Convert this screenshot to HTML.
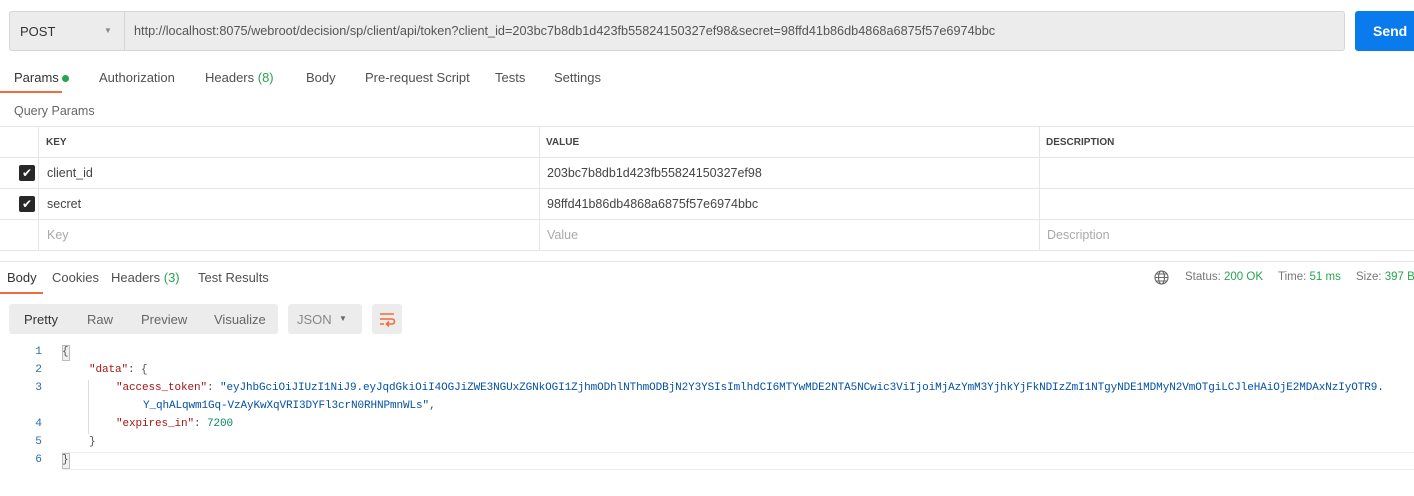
<!DOCTYPE html>
<html><head><meta charset="utf-8"><style>
*{margin:0;padding:0;box-sizing:border-box}
body{width:1414px;height:496px;overflow:hidden;background:#fff;font-family:"Liberation Sans",sans-serif;font-size:12px;color:#505050;position:relative}
.a{position:absolute;white-space:nowrap}
.g{color:#26a550}
.code{font-family:"Liberation Mono",monospace;font-size:11px;letter-spacing:-0.1px}
.ln{position:absolute;left:20px;width:22px;text-align:right;color:#2a6ea7;font-family:"Liberation Mono",monospace;font-size:11.2px}
.k{color:#a31515}.s{color:#0451a5}.n{color:#098658}
</style></head><body>
<div class="a" style="left:9px;top:11px;width:1336px;height:40px;background:#ececec;border:1px solid #d6d6d6;border-radius:3px"></div>
<div class="a" style="left:124px;top:12px;width:1px;height:38px;background:#d6d6d6"></div>
<div class="a" style="left:20px;top:24px;font-size:13px;color:#333">POST</div>
<div class="a" style="left:104px;top:26px;font-size:8px;color:#888">▼</div>
<div class="a" style="left:134px;top:24px;font-size:12.7px;color:#555">http://localhost:8075/webroot/decision/sp/client/api/token?client_id=203bc7b8db1d423fb55824150327ef98&amp;secret=98ffd41b86db4868a6875f57e6974bbc</div>
<div class="a" style="left:1355px;top:11px;width:70px;height:40px;background:#097bed;border-radius:3px;color:#fff;font-weight:bold;font-size:14px;padding:12px 0 0 18px">Send</div>

<div class="a" style="left:14px;top:70px;font-size:13px;color:#333">Params <span style="display:inline-block;width:7px;height:7px;border-radius:50%;background:#26a550"></span></div>
<div class="a" style="left:0;top:91px;width:62px;height:2px;background:#f26b3a"></div>
<div class="a" style="left:99px;top:70px;font-size:13px">Authorization</div>
<div class="a" style="left:205px;top:70px;font-size:13px">Headers <span class="g">(8)</span></div>
<div class="a" style="left:306px;top:70px;font-size:13px">Body</div>
<div class="a" style="left:365px;top:70px;font-size:13px">Pre-request Script</div>
<div class="a" style="left:495px;top:70px;font-size:13px">Tests</div>
<div class="a" style="left:554px;top:70px;font-size:13px">Settings</div>
<div class="a" style="left:14px;top:104px;font-size:12.5px;color:#666">Query Params</div>

<div class="a" style="left:0;top:126px;width:1414px;height:1px;background:#e6e6e6"></div>
<div class="a" style="left:0;top:157px;width:1414px;height:1px;background:#e6e6e6"></div>
<div class="a" style="left:0;top:188px;width:1414px;height:1px;background:#e6e6e6"></div>
<div class="a" style="left:0;top:219px;width:1414px;height:1px;background:#e6e6e6"></div>
<div class="a" style="left:0;top:250px;width:1414px;height:1px;background:#e6e6e6"></div>
<div class="a" style="left:38px;top:126px;width:1px;height:125px;background:#e6e6e6"></div>
<div class="a" style="left:539px;top:126px;width:1px;height:125px;background:#e6e6e6"></div>
<div class="a" style="left:1039px;top:126px;width:1px;height:125px;background:#e6e6e6"></div>
<div class="a" style="left:46px;top:137px;font-size:10px;font-weight:bold;color:#444">KEY</div>
<div class="a" style="left:546px;top:137px;font-size:10px;font-weight:bold;color:#444">VALUE</div>
<div class="a" style="left:1046px;top:137px;font-size:10px;font-weight:bold;color:#444">DESCRIPTION</div>
<div class="a" style="left:19px;top:165px;width:16px;height:16px;background:#282828;border-radius:2px;color:#fff;font-size:12px;text-align:center;line-height:16px">✔</div>
<div class="a" style="left:19px;top:196px;width:16px;height:16px;background:#282828;border-radius:2px;color:#fff;font-size:12px;text-align:center;line-height:16px">✔</div>
<div class="a" style="left:47px;top:166px;font-size:12.5px;color:#444">client_id</div>
<div class="a" style="left:547px;top:166px;font-size:12.5px;color:#444">203bc7b8db1d423fb55824150327ef98</div>
<div class="a" style="left:47px;top:197px;font-size:12.5px;color:#444">secret</div>
<div class="a" style="left:547px;top:197px;font-size:12.5px;color:#444">98ffd41b86db4868a6875f57e6974bbc</div>
<div class="a" style="left:47px;top:228px;font-size:12.5px;color:#aaa">Key</div>
<div class="a" style="left:547px;top:228px;font-size:12.5px;color:#aaa">Value</div>
<div class="a" style="left:1047px;top:228px;font-size:12.5px;color:#aaa">Description</div>

<div class="a" style="left:0;top:261px;width:1414px;height:1px;background:#e6e6e6"></div>
<div class="a" style="left:7px;top:270px;font-size:13px;color:#333">Body</div>
<div class="a" style="left:0;top:292px;width:43px;height:2px;background:#f26b3a"></div>
<div class="a" style="left:52px;top:270px;font-size:13px">Cookies</div>
<div class="a" style="left:111px;top:270px;font-size:13px">Headers <span class="g">(3)</span></div>
<div class="a" style="left:198px;top:270px;font-size:13px">Test Results</div>
<svg class="a" style="left:1154px;top:270px" width="15" height="15" viewBox="0 0 15 15" fill="none" stroke="#666" stroke-width="1.1"><circle cx="7.5" cy="7.5" r="6.5"/><ellipse cx="7.5" cy="7.5" rx="3" ry="6.5"/><path d="M1 7.5h13M2 4h11M2 11h11"/></svg>
<div class="a" style="left:1185px;top:271px;font-size:11.5px;color:#777">Status: <span class="g">200 OK</span></div>
<div class="a" style="left:1278px;top:271px;font-size:11.5px;color:#777">Time: <span class="g">51 ms</span></div>
<div class="a" style="left:1356px;top:271px;font-size:11.5px;color:#777">Size: <span class="g">397 B</span></div>

<div class="a" style="left:9px;top:304px;width:269px;height:30px;background:#ececec;border-radius:3px"></div>
<div class="a" style="left:24px;top:312px;font-size:13px;color:#333">Pretty</div>
<div class="a" style="left:87px;top:312px;font-size:13px;color:#666">Raw</div>
<div class="a" style="left:141px;top:312px;font-size:13px;color:#666">Preview</div>
<div class="a" style="left:214px;top:312px;font-size:13px;color:#666">Visualize</div>
<div class="a" style="left:288px;top:304px;width:74px;height:30px;background:#ececec;border-radius:3px"></div>
<div class="a" style="left:297px;top:312px;font-size:13px;color:#888">JSON</div>
<div class="a" style="left:339px;top:314px;font-size:8px;color:#666">▼</div>
<div class="a" style="left:372px;top:304px;width:30px;height:30px;background:#ececec;border-radius:3px"></div>
<svg class="a" style="left:378px;top:310px" width="18" height="18" viewBox="0 0 18 18" fill="none" stroke="#f26b3a" stroke-width="1.6"><path d="M2 4h14M2 9h12a2.5 2.5 0 0 1 0 5H9M11 11.5L8.5 14l2.5 2.5M2 14h4"/></svg>

<div class="ln" style="top:346px">1</div>
<div class="ln" style="top:364px">2</div>
<div class="ln" style="top:382px">3</div>
<div class="ln" style="top:418px">4</div>
<div class="ln" style="top:436px">5</div>
<div class="ln" style="top:454px">6</div>
<div class="a" style="left:62px;top:345px;width:8px;height:16px;border:1px solid #bbb;background:#f0f0f0"></div>
<div class="a" style="left:62px;top:453px;width:8px;height:16px;border:1px solid #bbb;background:#f0f0f0"></div>
<div class="a" style="left:62px;top:452px;width:1352px;height:18px;border-top:1px solid #eee;border-bottom:1px solid #eee"></div>
<div class="a" style="left:88px;top:380px;width:1px;height:54px;background:#ddd"></div>
<div class="a code" style="left:62px;top:346px">{</div>
<div class="a code" style="left:89px;top:364px"><span class="k">"data"</span>: {</div>
<div class="a code" style="left:116px;top:382px"><span class="k">"access_token"</span>: <span class="s">"eyJhbGciOiJIUzI1NiJ9.eyJqdGkiOiI4OGJiZWE3NGUxZGNkOGI1ZjhmODhlNThmODBjN2Y3YSIsImlhdCI6MTYwMDE2NTA5NCwic3ViIjoiMjAzYmM3YjhkYjFkNDIzZmI1NTgyNDE1MDMyN2VmOTgiLCJleHAiOjE2MDAxNzIyOTR9.</span></div>
<div class="a code" style="left:143px;top:400px"><span class="s">Y_qhALqwm1Gq-VzAyKwXqVRI3DYFl3crN0RHNPmnWLs"</span>,</div>
<div class="a code" style="left:116px;top:418px"><span class="k">"expires_in"</span>: <span class="n">7200</span></div>
<div class="a code" style="left:89px;top:436px">}</div>
<div class="a code" style="left:62px;top:454px">}</div>
</body></html>
